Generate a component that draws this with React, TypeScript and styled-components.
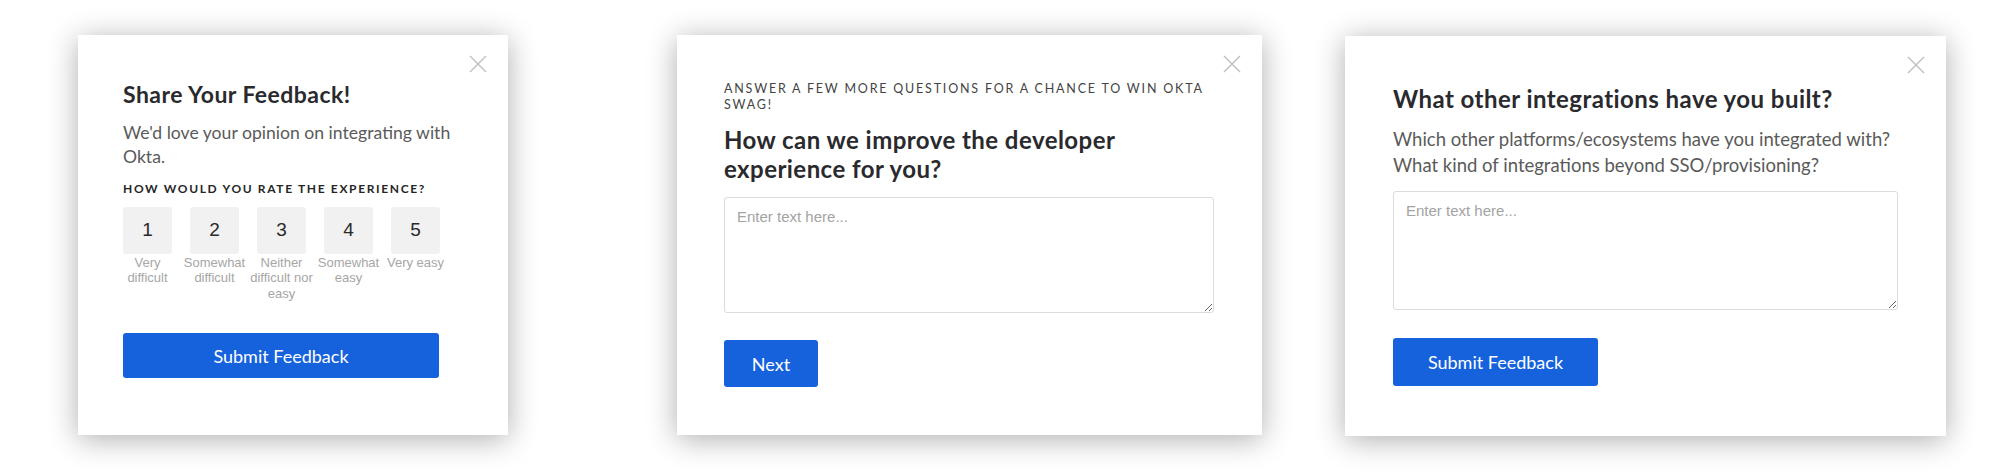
import React from "react";
import styled, { createGlobalStyle } from "styled-components";

const GlobalStyle = createGlobalStyle`
  html, body {
    margin: 0;
    padding: 0;
    background: #ffffff;
  }
  body {
    font-family: "Lato", "Open Sans", sans-serif;
    color: #2b2b2b;
  }
  * {
    box-sizing: border-box;
  }
`;

const colors = {
  blue: "#1662dd",
  title: "#2a2a2e",
  body: "#5a5a5a",
  muted: "#a6a6a6",
  tile: "#f1f1f1",
  border: "#dcdcdc",
};

const Page = styled.div`
  display: flex;
  align-items: flex-start;
  width: 2000px;
  height: 476px;
  padding: 35px 0 0 78px;
`;

const Card = styled.section<{ $width: number; $gap?: number; $top?: number }>`
  position: relative;
  width: ${(p) => p.$width}px;
  height: 400px;
  margin-left: ${(p) => p.$gap ?? 0}px;
  margin-top: ${(p) => p.$top ?? 0}px;
  padding: 46px 48px 0 47px;
  background: #ffffff;
  box-shadow: 0 4px 28px rgba(0, 0, 0, 0.32);
  display: flex;
  flex-direction: column;
  align-items: flex-start;
`;

const Close = styled.button`
  position: absolute;
  top: 20px;
  right: 21px;
  width: 18px;
  height: 18px;
  padding: 0;
  border: 0;
  background: none;
  cursor: pointer;
  display: flex;
`;

const Title = styled.h2<{ $size?: number; $lh?: number }>`
  margin: 0;
  font-size: ${(p) => p.$size ?? 24}px;
  font-weight: 700;
  letter-spacing: 0.45px;
  line-height: ${(p) => p.$lh ?? 27.6}px;
  color: ${colors.title};
`;

const Body = styled.p<{ $size?: number; $lh?: number }>`
  margin: 12px 0 0;
  font-size: ${(p) => p.$size ?? 17.6}px;
  line-height: ${(p) => p.$lh ?? 24}px;
  color: ${colors.body};
`;

const Eyebrow = styled.div`
  font-size: 12.5px;
  line-height: 16px;
  letter-spacing: 1.8px;
  text-transform: uppercase;
  color: #444;
  margin-bottom: 12px;
`;

const Label = styled.div`
  margin-top: 12px;
  font-size: 12px;
  font-weight: 700;
  line-height: 16px;
  letter-spacing: 1.65px;
  text-transform: uppercase;
  color: #262626;
`;

const Scale = styled.div`
  display: flex;
  gap: 18px;
  margin-top: 10px;
`;

const ScaleItem = styled.div`
  width: 49px;
  display: flex;
  flex-direction: column;
  align-items: center;
`;

const Tile = styled.button`
  width: 49px;
  height: 47px;
  border: 0;
  border-radius: 3px;
  background: ${colors.tile};
  font-family: "Liberation Sans", Arial, sans-serif;
  font-size: 19px;
  color: #2a2a2a;
  cursor: pointer;
`;

const TileCaption = styled.div`
  width: 68px;
  margin-top: 1px;
  font-family: "Liberation Sans", Arial, sans-serif;
  font-size: 13px;
  line-height: 15.5px;
  text-align: center;
  color: ${colors.muted};
`;

const TextBox = styled.textarea<{ $height: number; $top: number }>`
  width: 100%;
  height: ${(p) => p.$height}px;
  margin-top: ${(p) => p.$top}px;
  padding: 10px 12px;
  border: 1px solid ${colors.border};
  border-radius: 3px;
  font-family: "Liberation Sans", Arial, sans-serif;
  font-size: 15px;
  color: #333;
  resize: vertical;
  outline: none;

  &::placeholder {
    color: #a3a3a3;
  }
`;

const PrimaryButton = styled.button<{ $width: number; $height: number; $top: number }>`
  width: ${(p) => p.$width}px;
  height: ${(p) => p.$height}px;
  margin-top: ${(p) => p.$top}px;
  border: 0;
  border-radius: 3px;
  background: ${colors.blue};
  color: #ffffff;
  font-family: "Lato", "Open Sans", sans-serif;
  font-size: 18px;
  cursor: pointer;
`;

const CloseIcon = () => (
  <svg width="18" height="18" viewBox="0 0 18 18" fill="none">
    <path d="M1 1L17 17M17 1L1 17" stroke="#c2c2c2" strokeWidth="1.5" />
  </svg>
);

const ratings = [
  { value: 1, caption: "Very difficult" },
  { value: 2, caption: "Somewhat difficult" },
  { value: 3, caption: "Neither difficult nor easy" },
  { value: 4, caption: "Somewhat easy" },
  { value: 5, caption: "Very easy" },
];

const RatingCard = () => (
  <Card $width={430} style={{ paddingLeft: 45, paddingRight: 45 }}>
    <Close aria-label="Close">
      <CloseIcon />
    </Close>
    <Title $size={23}>Share Your Feedback!</Title>
    <Body>We'd love your opinion on integrating with Okta.</Body>
    <Label>How would you rate the experience?</Label>
    <Scale>
      {ratings.map((r) => (
        <ScaleItem key={r.value}>
          <Tile>{r.value}</Tile>
          <TileCaption>{r.caption}</TileCaption>
        </ScaleItem>
      ))}
    </Scale>
    <PrimaryButton $width={316} $height={45} $top={32}>
      Submit Feedback
    </PrimaryButton>
  </Card>
);

const ImproveCard = () => (
  <Card $width={585} $gap={169}>
    <Close aria-label="Close">
      <CloseIcon />
    </Close>
    <Eyebrow>Answer a few more questions for a chance to win Okta swag!</Eyebrow>
    <Title $lh={29}>How can we improve the developer experience for you?</Title>
    <TextBox $height={116} $top={14} placeholder="Enter text here..." />
    <PrimaryButton $width={94} $height={47} $top={27}>
      Next
    </PrimaryButton>
  </Card>
);

const IntegrationsCard = () => (
  <Card $width={601} $gap={83} $top={1} style={{ paddingTop: 48, paddingLeft: 48 }}>
    <Close aria-label="Close">
      <CloseIcon />
    </Close>
    <Title $lh={29}>What other integrations have you built?</Title>
    <Body $size={18.5} $lh={26} style={{ marginTop: 13 }}>
      Which other platforms/ecosystems have you integrated with? What kind of
      integrations beyond SSO/provisioning?
    </Body>
    <TextBox $height={119} $top={13} placeholder="Enter text here..." />
    <PrimaryButton $width={205} $height={48} $top={28}>
      Submit Feedback
    </PrimaryButton>
  </Card>
);

export default function App() {
  return (
    <>
      <GlobalStyle />
      <Page>
        <RatingCard />
        <ImproveCard />
        <IntegrationsCard />
      </Page>
    </>
  );
}
